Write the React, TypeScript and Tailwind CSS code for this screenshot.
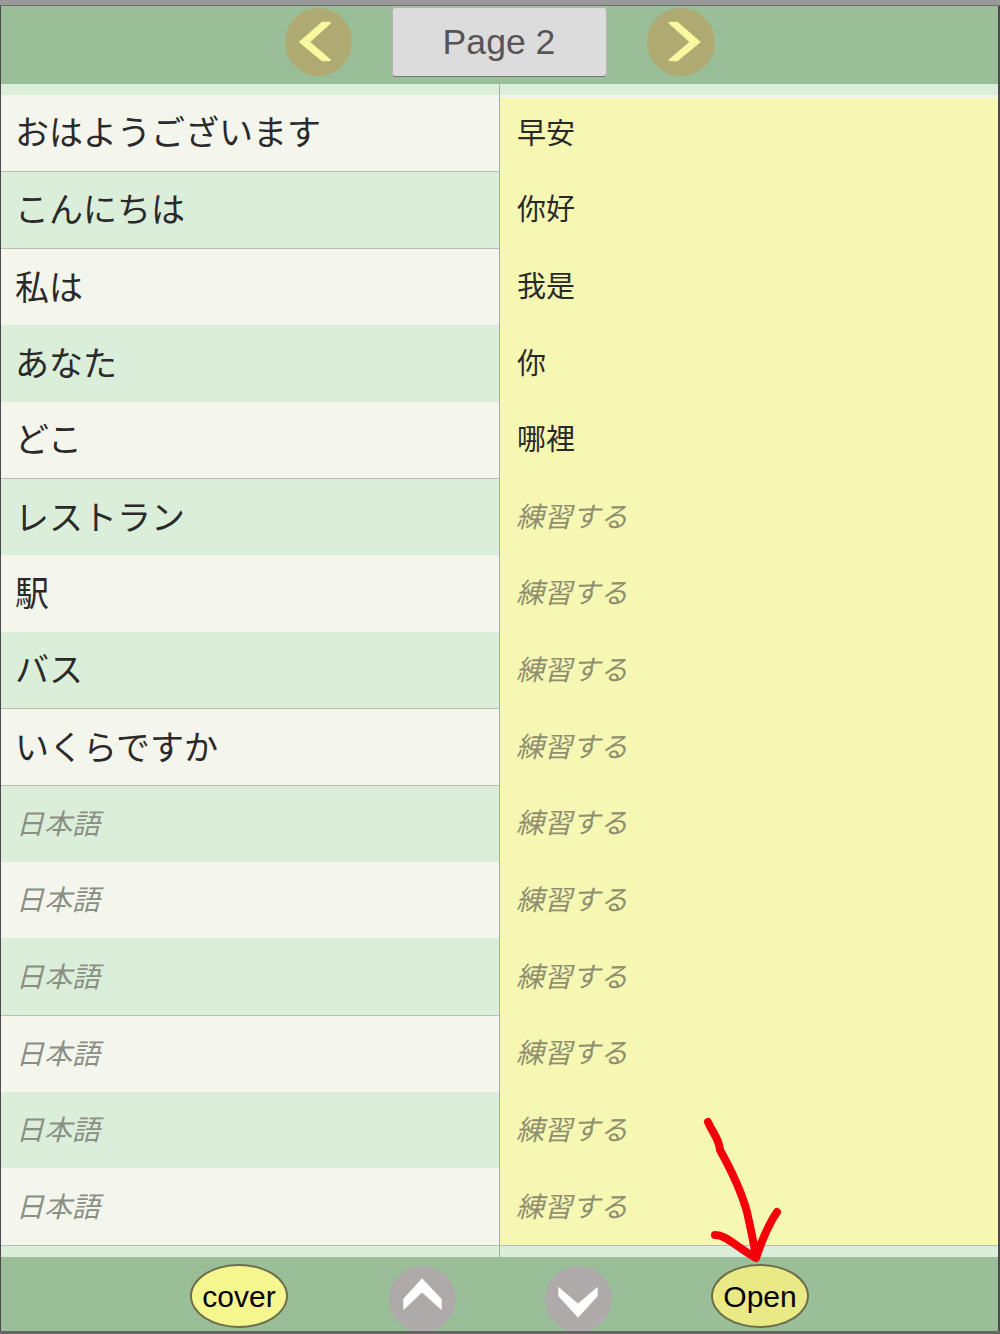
import React from "react";

const cjk = "font-['Noto_Sans_CJK_JP','Noto_Sans_CJK_TC',sans-serif]";

const rows = [
  { jp: "おはようございます", zh: "早安", line: false },
  { jp: "こんにちは", zh: "你好", line: false },
  { jp: "私は", zh: "我是", line: true },
  { jp: "あなた", zh: "你", line: false },
  { jp: "どこ", zh: "哪裡", line: false },
  { jp: "レストラン", zh: "", line: true },
  { jp: "駅", zh: "", line: false },
  { jp: "バス", zh: "", line: false },
  { jp: "いくらですか", zh: "", line: true },
  { jp: "", zh: "", line: true },
  { jp: "", zh: "", line: false },
  { jp: "", zh: "", line: false },
  { jp: "", zh: "", line: true },
  { jp: "", zh: "", line: false },
  { jp: "", zh: "", line: false },
];

const Chevron = ({ points, fill }: { points: string; fill: string }) => (
  <svg viewBox="0 0 67 68" className="w-full h-full">
    <polygon points={points} fill={fill} stroke={fill} strokeWidth="0.5" strokeLinejoin="round" />
  </svg>
);

const Oval = ({ label, className }: { label: string; className: string }) => (
  <div
    className={`w-[98px] h-[64px] rounded-[50%] border-2 border-[#6e6e4c] flex items-center justify-center font-['Liberation_Sans',sans-serif] text-[30px] text-black ${className}`}
  >
    {label}
  </div>
);

export default function App() {
  return (
    <div className="relative w-[1000px] h-[1334px] flex flex-col overflow-hidden bg-[#dbeed9]">
      <div className="h-[5px] bg-[#999999]" />
      <div className="h-px bg-[#6f6f6f]" />

      <div className="flex flex-col border-l border-r-2 border-[#4a4a4a]">
        {/* top bar */}
        <div className="h-[78px] bg-[#9abf98] flex items-start justify-center gap-10 pt-[2px]">
          <div className="w-[67px] h-[68px] rounded-[50%] bg-[#aeaa72]">
            <Chevron points="14,34 37,14 45,14 46,15 25,34 46,52 45,53 37,53" fill="#f8f9a0" />
          </div>
          <div className="w-[215px] h-[70px] -mt-px rounded-sm bg-[#dcdcdc] border border-[#b5b5b5] border-b-[#777] flex items-center justify-center pt-[2px] font-['Liberation_Sans',sans-serif] text-[35.6px] text-[#555555]">
            Page 2
          </div>
          <div className="w-[68px] h-[68px] rounded-[50%] bg-[#aeaa72]">
            <Chevron points="53,34 30,14 22,14 21,15 42,34 21,52 22,53 30,53" fill="#f8f9a0" />
          </div>
        </div>

        {/* table */}
        <div className={`flex h-[1173px] ${cjk}`}>
          <div className="w-[498px] flex flex-col">
            <div className="h-[11px] bg-[#dbeed9]" />
            <div className="h-[1150px] grid grid-rows-15">
              {rows.map((r, i) => (
                <div
                  key={i}
                  className={`flex items-center pb-[4px] ${i % 2 === 0 ? "bg-[#f4f5ed]" : "bg-[#dbeed9]"} ${r.line ? "border-t border-[#b9bdb4]" : ""} ${i === 0 ? "border-b border-[#b9bdb4]" : ""} ${r.jp ? "pl-[14px] text-[34px] text-[#2a2a2a]" : "pl-[15px] text-[28px] italic text-[#8a8f84]"}`}
                >
                  {r.jp || "日本語"}
                </div>
              ))}
            </div>
            <div className="h-[12px] bg-[#dbeed9] border-t border-[#b9bdb4]" />
          </div>
          <div className="w-px bg-[#a9aca4]" />
          <div className="flex-1 flex flex-col">
            <div className="h-[11px] bg-[#dbeed9]" />
            <div className="h-[1150px] bg-[#f6f7b3] grid grid-rows-15">
              {rows.map((r, i) => (
                <div
                  key={i}
                  className={`flex items-center ${i === 0 ? "border-t-[3px] border-[#f4f5ed] pb-[7px]" : "pb-[4px]"} ${r.zh ? "pl-[17px] text-[29px] text-[#2a2a2a]" : "pl-[16px] text-[28px] italic text-[#8f8f70]"}`}
                >
                  {r.zh || "練習する"}
                </div>
              ))}
            </div>
            <div className="h-[12px] bg-[#dbeed9] border-t border-[#b9bdb4]" />
          </div>
        </div>

        {/* bottom bar */}
        <div className="h-[74px] bg-[#9abf98] flex items-start pt-[7px] pl-[189px]">
          <Oval label="cover" className="bg-[#f6f68f]" />
          <div className="w-[67px] h-[66px] mt-[2px] ml-[101px] rounded-[50%] bg-[#aeaaaa]">
            <Chevron points="33,13 53,34 53,45 33,27 14,45 14,34" fill="#ffffff" />
          </div>
          <div className="w-[67px] h-[66px] mt-[2px] ml-[89px] rounded-[50%] bg-[#aeaaaa]">
            <Chevron points="13,22 33,39 53,22 53,31 33,53 13,31" fill="#ffffff" />
          </div>
          <Oval label="Open" className="ml-[99px] bg-[#e9e985]" />
        </div>
      </div>
      <div className="h-[3px] bg-[#666666]" />

      {/* hand drawn arrow */}
      <svg viewBox="0 0 100 170" className="absolute left-[700px] top-[1110px] w-[100px] h-[170px]" fill="none">
        <path
          d="M8 12 C13 24 19 28 20 40 C30 58 41 80 47 102 C51 120 54 134 56 147 M15 125 C26 125 34 135 56 148 C62 130 68 115 77 102"
          stroke="#f5000a"
          strokeWidth="8"
          strokeLinecap="round"
          strokeLinejoin="round"
        />
      </svg>
    </div>
  );
}
